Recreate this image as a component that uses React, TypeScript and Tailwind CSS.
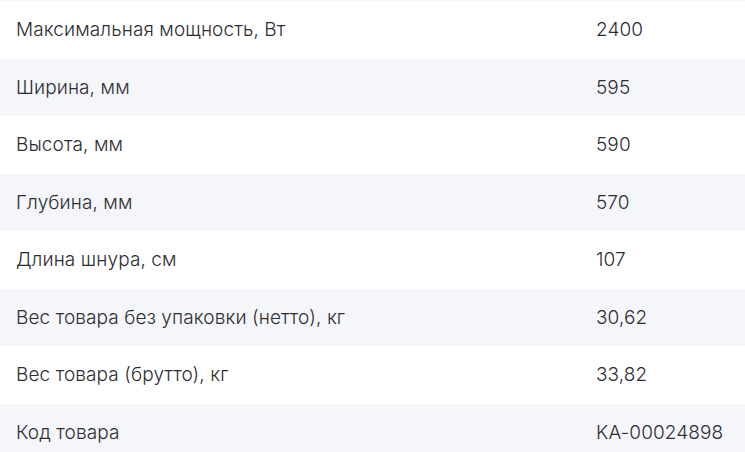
import React from 'react';

const specs: [string, string][] = [
  ['Максимальная мощность, Вт', '2400'],
  ['Ширина, мм', '595'],
  ['Высота, мм', '590'],
  ['Глубина, мм', '570'],
  ['Длина шнура, см', '107'],
  ['Вес товара без упаковки (нетто), кг', '30,62'],
  ['Вес товара (брутто), кг', '33,82'],
  ['Код товара', 'KA-00024898'],
];

export default function App() {
  return (
    <div className="w-[745px] h-[452px] overflow-hidden bg-white border-t border-[#f5f6fa] font-['Inter',sans-serif] text-[19px] tracking-[0.1px] font-[350] text-[#2d2e33]">
      {specs.map(([label, value], i) => (
        <div
          key={label}
          className={`grid grid-cols-[580px_1fr] items-center h-[57.5px] px-4 pt-px ${i % 2 === 1 ? 'bg-[#f5f6fa]' : 'bg-white'}`}
        >
          <span>{label}</span>
          <span>{value}</span>
        </div>
      ))}
    </div>
  );
}
